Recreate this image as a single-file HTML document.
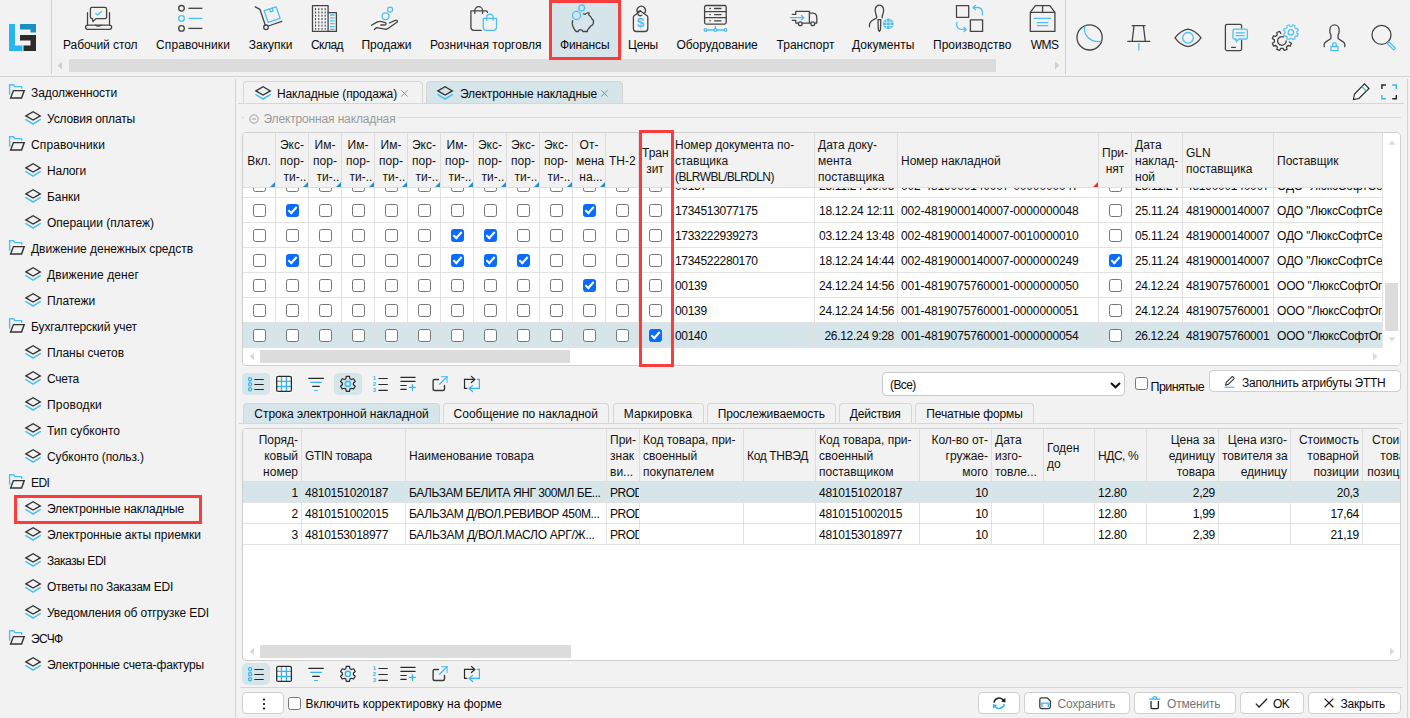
<!DOCTYPE html>
<html lang="ru"><head><meta charset="utf-8"><title>Финансы - Электронные накладные</title>
<style>

*{box-sizing:border-box;margin:0;padding:0}
html,body{width:1410px;height:718px;overflow:hidden;background:#f2f2f2}
body{font-family:"Liberation Sans",sans-serif;font-size:12px;color:#0a0a0a;position:relative}
#app{position:absolute;left:0;top:0;width:1410px;height:718px;overflow:hidden}
.abs{position:absolute}
svg{display:block;overflow:visible}
.t{position:absolute;white-space:nowrap;line-height:14px}
/* nav */
#nav{position:absolute;left:0;top:0;width:1410px;height:77px;background:#f2f2f2}
#nav .hl{position:absolute;left:0;top:76px;width:1410px;height:1px;background:#d2d2d2}
.vsep{position:absolute;width:1px;background:#d0d0d0}
.nv{position:absolute;top:0;height:58px}
.nv .lb{position:absolute;top:38px;left:50%;transform:translateX(-50%);white-space:nowrap;line-height:14px;font-size:12px;color:#141414}
.nv svg{position:absolute;top:4px;left:50%;margin-left:-15px}
.sbtrack{position:absolute;background:#dcdcdc}
/* side */
#side{position:absolute;left:0;top:77px;width:236px;height:641px}
.tr{position:absolute;left:0;height:26px;width:236px}
.tr .lb{position:absolute;top:6px;line-height:14px;white-space:nowrap}
/* main */
.tab{position:absolute;border:1px solid #d6d6d6;border-bottom:none;border-radius:4px 4px 0 0;background:#f2f2f2}
.tab.act{background:#d5e5ea}
.grid{position:absolute;background:#fff;border:1px solid #cfcfcf;border-radius:4px;overflow:hidden}
.hd{position:absolute;background:#f2f2f2;border-right:1px solid #dedede;border-bottom:1px solid #dedede;overflow:hidden}
.hd .hx{position:absolute;left:3px;right:3px;top:calc(50% + 0.5px);transform:translateY(-50%);line-height:17px;font-size:12px;color:#141414}
.cell{position:absolute;border-right:1px solid #e2e2e2;border-bottom:1px solid #e2e2e2;overflow:hidden;white-space:nowrap;line-height:25px;padding:1px 3px 0 3px}
.cb{position:absolute;width:13px;height:13px;border:1px solid #767676;border-radius:2.5px;background:#fff}
.cb.on{background:#0a6cff;border-color:#0a6cff}
.cb.on:after{content:"";position:absolute;left:3.2px;top:0.4px;width:3.4px;height:7px;border:solid #fff;border-width:0 2px 2px 0;transform:rotate(42deg)}
.btn{position:absolute;background:#fff;border:1px solid #cfcfcf;border-radius:4px;height:24px}
.tb{position:absolute;width:28px;height:22px;border-radius:4px}
.tb.on{background:#d5e5ea}
.tb svg{position:absolute;left:4px;top:1px}

</style></head>
<body>
<div id="app">
<div id="nav">
<svg class="abs" style="left:9px;top:24px" width="27" height="27" viewBox="0 0 27 27"><path d="M0 0h6v21.500h7.500v5.500H0z" fill="#29b6f0"/><path d="M11 0h16v8.500h-5.500v-3H11z" fill="#1b8fc4"/><path d="M11 11h16v16H14.500v-5.500H21.500v-5H11z" fill="#2b2b2b"/></svg>
<div class="vsep" style="left:51px;top:0;height:74px"></div>
<div class="vsep" style="left:1065px;top:0;height:74px"></div>
<div class="abs" style="left:549px;top:0;width:72px;height:60px;border:3px solid #f93d3d;background:#d5e5ea"></div>
<div class="t" style="left:63px;top:38px;letter-spacing:-0.069px;">Рабочий стол</div>
<div class="t" style="left:156px;top:38px;letter-spacing:0.118px;">Справочники</div>
<div class="t" style="left:248.75px;top:38px;letter-spacing:-0.002px;">Закупки</div>
<div class="t" style="left:311px;top:38px;letter-spacing:-0.547px;">Склад</div>
<div class="t" style="left:361.5px;top:38px;letter-spacing:-0.018px;">Продажи</div>
<div class="t" style="left:430px;top:38px;letter-spacing:0.010px;">Розничная торговля</div>
<div class="t" style="left:560px;top:38px;letter-spacing:-0.127px;">Финансы</div>
<div class="t" style="left:628px;top:38px;letter-spacing:-0.203px;">Цены</div>
<div class="t" style="left:676.4px;top:38px;letter-spacing:-0.023px;">Оборудование</div>
<div class="t" style="left:776.5px;top:38px;letter-spacing:0.031px;">Транспорт</div>
<div class="t" style="left:852px;top:38px;letter-spacing:0.071px;">Документы</div>
<div class="t" style="left:933px;top:38px;letter-spacing:0.021px;">Производство</div>
<div class="t" style="left:1030.8px;top:38px;letter-spacing:-0.509px;">WMS</div>
<svg class="abs" style="left:0;top:0" width="1410" height="77" viewBox="0 0 1410 77"><g fill="none" stroke="#444" stroke-width="1.3" stroke-linecap="round" stroke-linejoin="round"><rect x="85.6" y="25.2" width="26" height="4.2" rx="2.1"/><path d="M87.5 25V12.6M109.5 25V12.6M95.6 25.3q2.6 1.6 5.6 0"/><path d="M92 7.4h13a1.6 1.6 0 0 1 1.6 1.6v8a1.6 1.6 0 0 1 -1.6 1.6h-9.2l-2.8 3l-.6-3h-.4a1.6 1.6 0 0 1 -1.6-1.6v-8a1.6 1.6 0 0 1 1.6-1.6z"/></g><path fill="none" stroke="#4ec0f0" stroke-width="1.3" stroke-linecap="round" stroke-linejoin="round" stroke-width="1.5" d="M95.8 13.4l1.9 1.6l3.9-3.6"/><circle cx="181.5" cy="8.3" r="2.8" fill="none" stroke="#444" stroke-width="1.3"/><path d="M188.4 8.3H202.4" stroke="#444" stroke-width="1.3" fill="none"/><circle cx="181.5" cy="18.4" r="2.8" fill="none" stroke="#4ec0f0" stroke-width="1.3"/><path d="M188.4 18.4H202.4" stroke="#4ec0f0" stroke-width="1.3" fill="none"/><circle cx="181.5" cy="28.4" r="2.8" fill="none" stroke="#444" stroke-width="1.3"/><path d="M188.4 28.4H202.4" stroke="#444" stroke-width="1.3" fill="none"/><g fill="none" stroke="#444" stroke-width="1.3" stroke-linecap="round" stroke-linejoin="round"><path d="M255.3 6.9l4.6 2.4l5.4 16M268.4 26l13.4-4.6"/><circle cx="266" cy="27.3" r="2.3"/></g><g fill="none" stroke="#4ec0f0" stroke-width="1.3" stroke-linecap="round" stroke-linejoin="round" stroke-width="1.800"><path d="M264.200 10.700l11.900-3.900l4 11.600l-11.900 4z"/><path d="M269.6 8.9l1 3l2.6-.9l-1-3"/></g><g fill="none" stroke="#444" stroke-width="1.3" stroke-linecap="round" stroke-linejoin="round" stroke-linejoin="miter"><rect x="312.5" y="5.6" width="15.6" height="25.8"/><path d="M328.1 12.6h8.3v18.8h-8.3"/></g><path d="M315.6 8.2V29.6M318.8 8.2V29.6M322 8.2V29.6M325.2 8.2V29.6" stroke="#333" stroke-width="1" stroke-dasharray="1.9 1.4" fill="none"/><path d="M330 15H334.6M330 17.9H334.6M330 20.8H334.6M330 23.7H334.6M330 26.6H334.6M330 29.3H334.6" stroke="#4ec0f0" stroke-width="1.3" fill="none"/><circle cx="390.1" cy="9.6" r="2.5" fill="none" stroke="#4ec0f0" stroke-width="1.3" stroke-linecap="round" stroke-linejoin="round" stroke-width="1.5"/><circle cx="385.5" cy="16.3" r="3.4" fill="none" stroke="#4ec0f0" stroke-width="1.3" stroke-linecap="round" stroke-linejoin="round" stroke-width="1.5"/><g fill="none" stroke="#444" stroke-width="1.3" stroke-linecap="round" stroke-linejoin="round"><path d="M371.4 25.3l6-3.4q2-.9 4.400-.2l3.400 1q1.300.600.900 1.500q-.4.800-1.500.800h-3.800"/><path d="M374.400 29.600l2.200-2l8.400 1.600q1.600.300 3-.700l9.300-6.500q.500-.800-.300-1.400q-.700-.600-1.700-.300l-5.900 2.700"/></g><g fill="none" stroke="#444" stroke-width="1.3" stroke-linecap="round" stroke-linejoin="round"><path d="M481.300 30.300h-7.400a3 3 0 0 1 -3-3v-16.500h15q1.600 0 1.600 1.600M474.800 13.400v-2.800a3.900 3.900 0 0 1 7.800 0v2.800"/></g><g fill="none" stroke="#4ec0f0" stroke-width="1.3" stroke-linecap="round" stroke-linejoin="round" stroke-width="1.400"><path d="M483.300 18.300h13.200v9a3 3 0 0 1 -3 3h-7.200a3 3 0 0 1 -3-3zM486.700 20.300v-3a3.200 3.200 0 0 1 6.400 0v3"/></g><circle cx="576.5" cy="15.4" r="4.100" fill="none" stroke="#4ec0f0" stroke-width="1.3" stroke-linecap="round" stroke-linejoin="round"/><circle cx="581.7" cy="7.900" r="2.900" fill="none" stroke="#4ec0f0" stroke-width="1.3" stroke-linecap="round" stroke-linejoin="round"/><path fill="none" stroke="#444" stroke-width="1.3" stroke-linecap="round" stroke-linejoin="round" d="M572.600 20.700q-.900 2.800.500 6.100q1.100 2.600 3 4.700h2.200l.800-1.700h2.600l1.300 1.700h4.300l.500-2.100q1.800-1.500 3-3.500q2.100-.700 2.600-2.600v-3q-.600-.600-1.200-.900q-.600-1.800-1.800-3q-.900-.700-1.700-1.300l.400-2.100q-1.200-.300-2.100 0q-1.100.500-1.800 1.300l-1.700-.500"/><g fill="none" stroke="#444" stroke-width="1.3" stroke-linecap="round" stroke-linejoin="round"><path d="M640.500 11l6.600 4.800q.700.500.700 1.400v11.300a3 3 0 0 1 -3 3h-8.400a3 3 0 0 1 -3-3v-11.300q0-.9.700-1.400z"/><path d="M637.500 12.400a4.200 4.200 0 1 1 6.900 .9M640.500 11a2.400 2.400 0 1 0 1.200 4.200"/></g><text x="640.500" y="27.300" font-family="Liberation Sans,sans-serif" font-size="13" font-weight="bold" fill="#4ec0f0" text-anchor="middle">$</text><g fill="none" stroke="#444" stroke-width="1.3" stroke-linecap="round" stroke-linejoin="round" stroke-width="1.400"><rect x="704.600" y="5.500" width="21.600" height="18.600" rx="1.500"/><path d="M704.600 11.600h21.600M704.600 17.600h21.600M714.500 8.500h6.500M714.500 14.600h6.500M714.500 20.800h6.500M709.800 8.500h.6M709.800 14.600h.6M709.800 20.800h.6"/></g><g fill="none" stroke="#4ec0f0" stroke-width="1.3" stroke-linecap="round" stroke-linejoin="round"><path d="M706.800 30h7.300M716.800 30h7.300M715.400 26.500v2"/><circle cx="705.500" cy="30" r="1.300"/><circle cx="715.400" cy="30" r="1.300"/><circle cx="725.500" cy="30" r="1.300"/></g><g fill="none" stroke="#444" stroke-width="1.3" stroke-linecap="round" stroke-linejoin="round"><path d="M792.300 14.300h3.500v-3h13.600v11.800M792.300 20.400h3.500v2.700h2.400M802.400 23.100h8.400M809.400 13.200h3.600q3.800.4 3.800 4.600v5.300h-1.900"/><circle cx="800.300" cy="23.800" r="1.900"/><circle cx="812.800" cy="23.800" r="1.900"/></g><path fill="none" stroke="#4ec0f0" stroke-width="1.3" stroke-linecap="round" stroke-linejoin="round" stroke-width="1.500" d="M790.300 17.700h13.200M801.400 15.500l2.400 2.200l-2.400 2.200"/><g fill="none" stroke="#444" stroke-width="1.3" stroke-linecap="round" stroke-linejoin="round"><path d="M876.600 17.900q.300-1.700-.600-3.300q-1.300-3.600-.600-6.200q1-3.300 4-3.300t4 3.300q.700 2.600-.600 6.200q-.900 1.600-.600 3.300M876 18.300q-6 2.600-6.500 5.900v2.600M878 19.600h2.800l-.3 10l-1.100 1.800l-1.100-1.800z"/></g><circle cx="888.300" cy="23.800" r="5.300" fill="#4ec0f0"/><path d="M883.500 22.200h9.600M883.500 25.500h9.600M886.500 19v9.600M890.100 19v9.600" stroke="#d8f0fa" stroke-width=".8" fill="none"/><g fill="none" stroke="#444" stroke-width="1.3" stroke-linecap="round" stroke-linejoin="round" stroke-width="1.500" stroke-linejoin="miter"><rect x="956.500" y="5.700" width="12.200" height="11.600"/><rect x="970.400" y="19.800" width="12.200" height="11.600"/></g><g fill="none" stroke="#4ec0f0" stroke-width="1.3" stroke-linecap="round" stroke-linejoin="round" stroke-width="1.500"><path d="M982.400 14.700v-2.400q-.2-4.600-4.800-4.800h-4.400M975.300 5.500l-2.300 2l2.300 2"/><path d="M956.700 22.400v2.400q.2 4.400 4.800 4.600h4.400M964 27.300l2.300 2.100l-2.300 2.100"/></g><g fill="none" stroke="#444" stroke-width="1.3" stroke-linecap="round" stroke-linejoin="round" stroke-width="1.500" stroke-linejoin="miter"><path d="M1030.300 12.400h24.600v19h-24.600zM1030.300 12.400l5-6.800h14.500l5.100 6.800M1042.600 5.600v6.800"/></g><path fill="none" stroke="#4ec0f0" stroke-width="1.3" stroke-linecap="round" stroke-linejoin="round" stroke-width="1.500" d="M1034.200 18.300h16.400M1037.200 22.600h10.600M1037.200 25.600h10.600"/><circle cx="1089.600" cy="37.400" r="12.600" fill="none" stroke="#444" stroke-width="1.3" stroke-linecap="round" stroke-linejoin="round" stroke-width="1.500"/><path fill="none" stroke="#4ec0f0" stroke-width="1.3" stroke-linecap="round" stroke-linejoin="round" d="M1085 26q-2 6 2.800 11.200q5.200 5.200 13.200 4.200"/><path fill="none" stroke="#444" stroke-width="1.3" stroke-linecap="round" stroke-linejoin="round" stroke-width="1.400" d="M1132.200 25.700h12.800M1134 25.700l-1.800 15.600M1143.400 25.700l1.900 15.600M1127.800 41.400h22"/><path fill="none" stroke="#4ec0f0" stroke-width="1.3" stroke-linecap="round" stroke-linejoin="round" stroke-width="1.600" d="M1138.900 43.600v6.400"/><path fill="none" stroke="#444" stroke-width="1.3" stroke-linecap="round" stroke-linejoin="round" stroke-width="1.500" d="M1175 37.800q5.400-7.200 13-8.600q7.600 1.400 13 8.600q-5.400 7.400-13 8.900q-7.600-1.500-13-8.900z"/><circle cx="1188" cy="37.800" r="5.300" fill="none" stroke="#4ec0f0" stroke-width="1.3" stroke-linecap="round" stroke-linejoin="round" stroke-width="1.600"/><path fill="none" stroke="#444" stroke-width="1.3" stroke-linecap="round" stroke-linejoin="round" stroke-width="1.400" d="M1241.600 28v-2a1.600 1.600 0 0 0 -1.600-1.600h-13a1.600 1.600 0 0 0 -1.600 1.600v23a1.600 1.600 0 0 0 1.600 1.600h13a1.600 1.600 0 0 0 1.600-1.600v-8.500M1231.600 47.300h3.800"/><path fill="none" stroke="#4ec0f0" stroke-width="1.3" stroke-linecap="round" stroke-linejoin="round" d="M1234.600 29.200h11.200a1.600 1.600 0 0 1 1.600 1.600v6.600a1.600 1.600 0 0 1 -1.600 1.600h-6.800l-2.800 2.700v-2.700h-1.600a1.600 1.600 0 0 1 -1.600-1.600v-6.600a1.600 1.600 0 0 1 1.600-1.600zM1236.200 32.900h8M1236.200 35.700h8"/><path fill="none" stroke="#444" stroke-width="1.3" stroke-linecap="round" stroke-linejoin="round" stroke-width="1.400" d="M1289.4 42.0 L1291.4 43.2 L1290.3 46.0 L1288.0 45.5 L1286.5 47.0 L1287.0 49.3 L1284.2 50.4 L1283.0 48.4 L1280.8 48.4 L1279.6 50.4 L1276.8 49.3 L1277.3 47.0 L1275.8 45.5 L1273.5 46.0 L1272.4 43.2 L1274.4 42.0 L1274.4 39.8 L1272.4 38.6 L1273.5 35.8 L1275.8 36.3 L1277.3 34.8 L1276.8 32.5 L1279.6 31.4 L1280.8 33.4"/><path fill="none" stroke="#444" stroke-width="1.3" stroke-linecap="round" stroke-linejoin="round" stroke-width="1.400" d="M1283.400 36.900A4.300 4.300 0 1 0 1286.200 40.900"/><path fill="none" stroke="#4ec0f0" stroke-width="1.3" stroke-linecap="round" stroke-linejoin="round" stroke-width="1" stroke-opacity=".85" d="M1296.9 33.2 L1298.3 34.1 L1297.4 36.3 L1295.8 36.0 L1294.6 37.2 L1294.9 38.8 L1292.7 39.7 L1291.8 38.3 L1290.0 38.3 L1289.1 39.7 L1286.9 38.8 L1287.2 37.2 L1286.0 36.0 L1284.4 36.3 L1283.5 34.1 L1284.9 33.2 L1284.9 31.4 L1283.5 30.5 L1284.4 28.3 L1286.0 28.6 L1287.2 27.4 L1286.9 25.8 L1289.1 24.9 L1290.0 26.3 L1291.8 26.3 L1292.7 24.9 L1294.9 25.8 L1294.6 27.4 L1295.8 28.6 L1297.4 28.3 L1298.3 30.5 L1296.9 31.4z"/><circle cx="1290.900" cy="32.300" r="2.700" fill="none" stroke="#4ec0f0" stroke-width="1.3" stroke-linecap="round" stroke-linejoin="round" stroke-width="1.300"/><path fill="none" stroke="#444" stroke-width="1.3" stroke-linecap="round" stroke-linejoin="round" stroke-width="1.400" d="M1324.200 46.700V44.500q0-1.600 1.400-2.400l5.300-3.600v-3.900q-1-.900-1-2.300v-2.800a4.600 4.600 0 0 1 9.200 0v2.800q0 1.400-1 2.300v3.900l5.300 3.600q1.400.800 1.400 2.400V46.700"/><path fill="none" stroke="#4ec0f0" stroke-width="1.3" stroke-linecap="round" stroke-linejoin="round" stroke-width="1.300" d="M1331 46.500h7v4.100h-7zM1332.700 46.400v-1.900a1.800 1.800 0 0 1 3.600 0v1.900"/><circle cx="1381.500" cy="34.900" r="9.500" fill="none" stroke="#444" stroke-width="1.3" stroke-linecap="round" stroke-linejoin="round" stroke-width="1.600"/><path fill="none" stroke="#4ec0f0" stroke-width="1.3" stroke-linecap="round" stroke-linejoin="round" stroke-width="1.500" stroke-linejoin="miter" d="M1387.200 43.500l1.700-1.700l6.500 6.400l-1.700 1.700z"/></svg>
<div class="sbtrack" style="left:69px;top:59px;width:927px;height:13px"></div>
<svg class="abs" style="left:57px;top:61px" width="6" height="9" viewBox="0 0 6 9"><path d="M5 0.500v8L0.500 4.500z" fill="#d0d0d0"/></svg>
<svg class="abs" style="left:1054px;top:61px" width="6" height="9" viewBox="0 0 6 9"><path d="M1 0.500v8L5.500 4.500z" fill="#d0d0d0"/></svg>
<div class="abs" style="left:549px;top:0;width:72px;height:60px;border:3px solid #f93d3d"></div>
<div class="hl"></div>
</div>
<div id="side">
<div class="vsep" style="left:235px;top:2px;height:640px;background:#d4d4d4"></div>
<div class="tr" style="top:3px"><div class="abs" style="left:9px;top:4px"><svg width="16" height="15" viewBox="9 84 16 15"><path d="M9.600 94.800V84.800h4.200l1 1.800h6.900v2.200" fill="none" stroke="#4ec0f0" stroke-width="1.400" stroke-linejoin="round"/><path d="M10.600 98h11l2.600-7.400h-10.800z" fill="none" stroke="#333" stroke-width="1.400" stroke-linejoin="miter"/></svg></div><div class="lb" style="left:31px;letter-spacing:-0.090px;">Задолженности</div></div>
<div class="tr" style="top:29px"><div class="abs" style="left:25px;top:5px"><svg width="16" height="14" viewBox="25 111 16 14"><path d="M25.900 119.600l7.200 4.400l7.200-4.400" fill="none" stroke="#4ec0f0" stroke-width="1.500" stroke-linecap="round" stroke-linejoin="miter"/><path d="M25.900 115.900l7.200-4.200l7.200 4.200l-7.200 4.200z" fill="none" stroke="#333" stroke-width="1.300" stroke-linejoin="miter"/></svg></div><div class="lb" style="left:47px;letter-spacing:-0.161px;">Условия оплаты</div></div>
<div class="tr" style="top:55px"><div class="abs" style="left:9px;top:4px"><svg width="16" height="15" viewBox="9 84 16 15"><path d="M9.600 94.800V84.800h4.200l1 1.800h6.900v2.200" fill="none" stroke="#4ec0f0" stroke-width="1.400" stroke-linejoin="round"/><path d="M10.600 98h11l2.600-7.400h-10.800z" fill="none" stroke="#333" stroke-width="1.400" stroke-linejoin="miter"/></svg></div><div class="lb" style="left:31px;letter-spacing:0.118px;">Справочники</div></div>
<div class="tr" style="top:81px"><div class="abs" style="left:25px;top:5px"><svg width="16" height="14" viewBox="25 111 16 14"><path d="M25.900 119.600l7.200 4.400l7.200-4.400" fill="none" stroke="#4ec0f0" stroke-width="1.500" stroke-linecap="round" stroke-linejoin="miter"/><path d="M25.900 115.900l7.200-4.200l7.200 4.200l-7.200 4.200z" fill="none" stroke="#333" stroke-width="1.300" stroke-linejoin="miter"/></svg></div><div class="lb" style="left:47px;letter-spacing:-0.206px;">Налоги</div></div>
<div class="tr" style="top:107px"><div class="abs" style="left:25px;top:5px"><svg width="16" height="14" viewBox="25 111 16 14"><path d="M25.900 119.600l7.200 4.400l7.200-4.400" fill="none" stroke="#4ec0f0" stroke-width="1.500" stroke-linecap="round" stroke-linejoin="miter"/><path d="M25.900 115.900l7.200-4.200l7.200 4.200l-7.200 4.200z" fill="none" stroke="#333" stroke-width="1.300" stroke-linejoin="miter"/></svg></div><div class="lb" style="left:47px;letter-spacing:-0.028px;">Банки</div></div>
<div class="tr" style="top:133px"><div class="abs" style="left:25px;top:5px"><svg width="16" height="14" viewBox="25 111 16 14"><path d="M25.900 119.600l7.200 4.400l7.200-4.400" fill="none" stroke="#4ec0f0" stroke-width="1.500" stroke-linecap="round" stroke-linejoin="miter"/><path d="M25.900 115.900l7.200-4.200l7.200 4.200l-7.200 4.200z" fill="none" stroke="#333" stroke-width="1.300" stroke-linejoin="miter"/></svg></div><div class="lb" style="left:47px;letter-spacing:-0.017px;">Операции (платеж)</div></div>
<div class="tr" style="top:159px"><div class="abs" style="left:9px;top:4px"><svg width="16" height="15" viewBox="9 84 16 15"><path d="M9.600 94.800V84.800h4.200l1 1.800h6.900v2.200" fill="none" stroke="#4ec0f0" stroke-width="1.400" stroke-linejoin="round"/><path d="M10.600 98h11l2.600-7.400h-10.800z" fill="none" stroke="#333" stroke-width="1.400" stroke-linejoin="miter"/></svg></div><div class="lb" style="left:31px;letter-spacing:-0.026px;">Движение денежных средств</div></div>
<div class="tr" style="top:185px"><div class="abs" style="left:25px;top:5px"><svg width="16" height="14" viewBox="25 111 16 14"><path d="M25.900 119.600l7.200 4.400l7.200-4.400" fill="none" stroke="#4ec0f0" stroke-width="1.500" stroke-linecap="round" stroke-linejoin="miter"/><path d="M25.900 115.900l7.200-4.200l7.200 4.200l-7.200 4.200z" fill="none" stroke="#333" stroke-width="1.300" stroke-linejoin="miter"/></svg></div><div class="lb" style="left:47px;letter-spacing:0.099px;">Движение денег</div></div>
<div class="tr" style="top:211px"><div class="abs" style="left:25px;top:5px"><svg width="16" height="14" viewBox="25 111 16 14"><path d="M25.900 119.600l7.200 4.400l7.200-4.400" fill="none" stroke="#4ec0f0" stroke-width="1.500" stroke-linecap="round" stroke-linejoin="miter"/><path d="M25.900 115.900l7.200-4.200l7.200 4.200l-7.200 4.200z" fill="none" stroke="#333" stroke-width="1.300" stroke-linejoin="miter"/></svg></div><div class="lb" style="left:47px;letter-spacing:-0.096px;">Платежи</div></div>
<div class="tr" style="top:237px"><div class="abs" style="left:9px;top:4px"><svg width="16" height="15" viewBox="9 84 16 15"><path d="M9.600 94.800V84.800h4.200l1 1.800h6.900v2.200" fill="none" stroke="#4ec0f0" stroke-width="1.400" stroke-linejoin="round"/><path d="M10.600 98h11l2.600-7.400h-10.800z" fill="none" stroke="#333" stroke-width="1.400" stroke-linejoin="miter"/></svg></div><div class="lb" style="left:31px;letter-spacing:-0.118px;">Бухгалтерский учет</div></div>
<div class="tr" style="top:263px"><div class="abs" style="left:25px;top:5px"><svg width="16" height="14" viewBox="25 111 16 14"><path d="M25.900 119.600l7.200 4.400l7.200-4.400" fill="none" stroke="#4ec0f0" stroke-width="1.500" stroke-linecap="round" stroke-linejoin="miter"/><path d="M25.900 115.900l7.200-4.200l7.200 4.200l-7.200 4.200z" fill="none" stroke="#333" stroke-width="1.300" stroke-linejoin="miter"/></svg></div><div class="lb" style="left:47px;letter-spacing:-0.059px;">Планы счетов</div></div>
<div class="tr" style="top:289px"><div class="abs" style="left:25px;top:5px"><svg width="16" height="14" viewBox="25 111 16 14"><path d="M25.900 119.600l7.200 4.400l7.200-4.400" fill="none" stroke="#4ec0f0" stroke-width="1.500" stroke-linecap="round" stroke-linejoin="miter"/><path d="M25.900 115.900l7.200-4.200l7.200 4.200l-7.200 4.200z" fill="none" stroke="#333" stroke-width="1.300" stroke-linejoin="miter"/></svg></div><div class="lb" style="left:47px;letter-spacing:-0.219px;">Счета</div></div>
<div class="tr" style="top:315px"><div class="abs" style="left:25px;top:5px"><svg width="16" height="14" viewBox="25 111 16 14"><path d="M25.900 119.600l7.200 4.400l7.200-4.400" fill="none" stroke="#4ec0f0" stroke-width="1.500" stroke-linecap="round" stroke-linejoin="miter"/><path d="M25.900 115.900l7.200-4.200l7.200 4.200l-7.200 4.200z" fill="none" stroke="#333" stroke-width="1.300" stroke-linejoin="miter"/></svg></div><div class="lb" style="left:47px;letter-spacing:0.178px;">Проводки</div></div>
<div class="tr" style="top:341px"><div class="abs" style="left:25px;top:5px"><svg width="16" height="14" viewBox="25 111 16 14"><path d="M25.900 119.600l7.200 4.400l7.200-4.400" fill="none" stroke="#4ec0f0" stroke-width="1.500" stroke-linecap="round" stroke-linejoin="miter"/><path d="M25.900 115.900l7.200-4.200l7.200 4.200l-7.200 4.200z" fill="none" stroke="#333" stroke-width="1.300" stroke-linejoin="miter"/></svg></div><div class="lb" style="left:47px;letter-spacing:-0.007px;">Тип субконто</div></div>
<div class="tr" style="top:367px"><div class="abs" style="left:25px;top:5px"><svg width="16" height="14" viewBox="25 111 16 14"><path d="M25.900 119.600l7.200 4.400l7.200-4.400" fill="none" stroke="#4ec0f0" stroke-width="1.500" stroke-linecap="round" stroke-linejoin="miter"/><path d="M25.900 115.900l7.200-4.200l7.200 4.200l-7.200 4.200z" fill="none" stroke="#333" stroke-width="1.300" stroke-linejoin="miter"/></svg></div><div class="lb" style="left:47px;letter-spacing:-0.101px;">Субконто (польз.)</div></div>
<div class="tr" style="top:393px"><div class="abs" style="left:9px;top:4px"><svg width="16" height="15" viewBox="9 84 16 15"><path d="M9.600 94.800V84.800h4.200l1 1.800h6.900v2.200" fill="none" stroke="#4ec0f0" stroke-width="1.400" stroke-linejoin="round"/><path d="M10.600 98h11l2.600-7.400h-10.800z" fill="none" stroke="#333" stroke-width="1.400" stroke-linejoin="miter"/></svg></div><div class="lb" style="left:31px;letter-spacing:-0.600px;">EDI</div></div>
<div class="tr" style="top:419px"><div class="abs" style="left:25px;top:5px"><svg width="16" height="14" viewBox="25 111 16 14"><path d="M25.900 119.600l7.200 4.400l7.200-4.400" fill="none" stroke="#4ec0f0" stroke-width="1.500" stroke-linecap="round" stroke-linejoin="miter"/><path d="M25.900 115.900l7.200-4.200l7.200 4.200l-7.200 4.200z" fill="none" stroke="#333" stroke-width="1.300" stroke-linejoin="miter"/></svg></div><div class="lb" style="left:47px;letter-spacing:-0.110px;">Электронные накладные</div></div>
<div class="tr" style="top:445px"><div class="abs" style="left:25px;top:5px"><svg width="16" height="14" viewBox="25 111 16 14"><path d="M25.900 119.600l7.200 4.400l7.200-4.400" fill="none" stroke="#4ec0f0" stroke-width="1.500" stroke-linecap="round" stroke-linejoin="miter"/><path d="M25.900 115.900l7.200-4.200l7.200 4.200l-7.200 4.200z" fill="none" stroke="#333" stroke-width="1.300" stroke-linejoin="miter"/></svg></div><div class="lb" style="left:47px;letter-spacing:-0.012px;">Электронные акты приемки</div></div>
<div class="tr" style="top:471px"><div class="abs" style="left:25px;top:5px"><svg width="16" height="14" viewBox="25 111 16 14"><path d="M25.900 119.600l7.200 4.400l7.200-4.400" fill="none" stroke="#4ec0f0" stroke-width="1.500" stroke-linecap="round" stroke-linejoin="miter"/><path d="M25.900 115.900l7.200-4.200l7.200 4.200l-7.200 4.200z" fill="none" stroke="#333" stroke-width="1.300" stroke-linejoin="miter"/></svg></div><div class="lb" style="left:47px;letter-spacing:-0.445px;">Заказы EDI</div></div>
<div class="tr" style="top:497px"><div class="abs" style="left:25px;top:5px"><svg width="16" height="14" viewBox="25 111 16 14"><path d="M25.900 119.600l7.200 4.400l7.200-4.400" fill="none" stroke="#4ec0f0" stroke-width="1.500" stroke-linecap="round" stroke-linejoin="miter"/><path d="M25.900 115.900l7.200-4.200l7.200 4.200l-7.200 4.200z" fill="none" stroke="#333" stroke-width="1.300" stroke-linejoin="miter"/></svg></div><div class="lb" style="left:47px;letter-spacing:-0.240px;">Ответы по Заказам EDI</div></div>
<div class="tr" style="top:523px"><div class="abs" style="left:25px;top:5px"><svg width="16" height="14" viewBox="25 111 16 14"><path d="M25.900 119.600l7.200 4.400l7.200-4.400" fill="none" stroke="#4ec0f0" stroke-width="1.500" stroke-linecap="round" stroke-linejoin="miter"/><path d="M25.900 115.900l7.200-4.200l7.200 4.200l-7.200 4.200z" fill="none" stroke="#333" stroke-width="1.300" stroke-linejoin="miter"/></svg></div><div class="lb" style="left:47px;letter-spacing:-0.110px;">Уведомления об отгрузке EDI</div></div>
<div class="tr" style="top:549px"><div class="abs" style="left:9px;top:4px"><svg width="16" height="15" viewBox="9 84 16 15"><path d="M9.600 94.800V84.800h4.200l1 1.800h6.900v2.200" fill="none" stroke="#4ec0f0" stroke-width="1.400" stroke-linejoin="round"/><path d="M10.600 98h11l2.600-7.400h-10.800z" fill="none" stroke="#333" stroke-width="1.400" stroke-linejoin="miter"/></svg></div><div class="lb" style="left:31px;letter-spacing:-0.600px;">ЭСЧФ</div></div>
<div class="tr" style="top:575px"><div class="abs" style="left:25px;top:5px"><svg width="16" height="14" viewBox="25 111 16 14"><path d="M25.900 119.600l7.200 4.400l7.200-4.400" fill="none" stroke="#4ec0f0" stroke-width="1.500" stroke-linecap="round" stroke-linejoin="miter"/><path d="M25.900 115.900l7.200-4.200l7.200 4.200l-7.200 4.200z" fill="none" stroke="#333" stroke-width="1.300" stroke-linejoin="miter"/></svg></div><div class="lb" style="left:47px;letter-spacing:-0.167px;">Электронные счета-фактуры</div></div>
<div class="abs" style="left:14px;top:418px;width:188px;height:29px;border:3px solid #f93d3d"></div>
</div>
<div id="main">
<div class="vsep" style="left:1407px;top:79px;height:639px;background:#d4d4d4"></div>
<div class="abs" style="left:238px;top:103px;width:1166px;height:1px;background:#d6d6d6"></div>
<div class="tab" style="left:243px;top:81px;width:180px;height:22px"><div class="abs" style="left:10.500px;top:4px"><svg width="16" height="14" viewBox="25 111 16 14"><path d="M25.900 119.600l7.200 4.400l7.200-4.400" fill="none" stroke="#4ec0f0" stroke-width="1.500" stroke-linecap="round"/><path d="M25.900 115.900l7.200-4.200l7.200 4.200l-7.200 4.200z" fill="none" stroke="#333" stroke-width="1.300"/></svg></div><div class="t" style="left:33px;top:5px;letter-spacing:-0.138px;">Накладные (продажа)</div><svg class="abs" style="left:156.600px;top:7.800px" width="7" height="7" viewBox="0 0 7 7"><path d="M0.300 0.300l6.200 6.200M6.500 0.300l-6.200 6.200" stroke="#8c8c8c" stroke-width="1" fill="none"/></svg></div>
<div class="tab act" style="left:426px;top:81px;width:197px;height:22px"><div class="abs" style="left:10px;top:4px"><svg width="16" height="14" viewBox="25 111 16 14"><path d="M25.900 119.600l7.200 4.400l7.200-4.400" fill="none" stroke="#4ec0f0" stroke-width="1.500" stroke-linecap="round"/><path d="M25.900 115.900l7.200-4.200l7.200 4.200l-7.200 4.200z" fill="none" stroke="#333" stroke-width="1.300"/></svg></div><div class="t" style="left:33px;top:5px;letter-spacing:-0.110px;">Электронные накладные</div><svg class="abs" style="left:173.700px;top:7.800px" width="7" height="7" viewBox="0 0 7 7"><path d="M0.300 0.300l6.200 6.200M6.500 0.300l-6.200 6.200" stroke="#8c8c8c" stroke-width="1" fill="none"/></svg></div>
<svg class="abs" style="left:1352px;top:83px" width="18" height="18" viewBox="1352 83 18 18"><path d="M1353.400 99.500L1354.500 94L1364.500 83.900L1369 88.500L1358.900 98.500z" fill="#f8f8f8" stroke="#222" stroke-width="1.100" stroke-linejoin="miter"/><path d="M1361.900 86.700L1366.300 91.100" stroke="#35b5ee" stroke-width="1.200"/></svg>
<svg class="abs" style="left:1380px;top:83px" width="18" height="18" viewBox="1380 83 18 18"><path d="M1381.900 88.900v-3.900h4M1396.300 94.900v3.900h-4" fill="none" stroke="#222" stroke-width="1.400"/><path d="M1392.300 85h4v3.900M1385.900 98.800h-4v-3.900" fill="none" stroke="#35b5ee" stroke-width="1.400"/></svg>
<div class="abs" style="left:242px;top:117px;width:1159px;height:1px;background:#dadada"></div>
<div class="abs" style="left:244px;top:110px;width:153px;height:16px;background:#f2f2f2"></div>
<svg class="abs" style="left:249px;top:113.500px" width="10" height="10" viewBox="0 0 10 10"><circle cx="5" cy="5" r="4.200" fill="none" stroke="#a0a0a0" stroke-width="1"/><path d="M2.800 5h4.400" stroke="#a0a0a0" stroke-width="1"/></svg>
<div class="t" style="left:263.500px;top:112px;color:#9a9a9a;letter-spacing:-0.146px;">Электронная накладная</div>
<div class="grid" style="left:242px;top:132px;width:1159px;height:234px"><div class="cell" style="left:0px;top:40px;width:33px;height:25px;"><div class="cb" style="left:10px;top:6px"></div></div><div class="cell" style="left:33px;top:40px;width:33px;height:25px;"><div class="cb" style="left:10px;top:6px"></div></div><div class="cell" style="left:66px;top:40px;width:33px;height:25px;"><div class="cb" style="left:10px;top:6px"></div></div><div class="cell" style="left:99px;top:40px;width:33px;height:25px;"><div class="cb" style="left:10px;top:6px"></div></div><div class="cell" style="left:132px;top:40px;width:33px;height:25px;"><div class="cb" style="left:10px;top:6px"></div></div><div class="cell" style="left:165px;top:40px;width:33px;height:25px;"><div class="cb" style="left:10px;top:6px"></div></div><div class="cell" style="left:198px;top:40px;width:33px;height:25px;"><div class="cb" style="left:10px;top:6px"></div></div><div class="cell" style="left:231px;top:40px;width:33px;height:25px;"><div class="cb" style="left:10px;top:6px"></div></div><div class="cell" style="left:264px;top:40px;width:33px;height:25px;"><div class="cb" style="left:10px;top:6px"></div></div><div class="cell" style="left:297px;top:40px;width:33px;height:25px;"><div class="cb" style="left:10px;top:6px"></div></div><div class="cell" style="left:330px;top:40px;width:33px;height:25px;"><div class="cb" style="left:10px;top:6px"></div></div><div class="cell" style="left:363px;top:40px;width:33px;height:25px;"><div class="cb" style="left:10px;top:6px"></div></div><div class="cell" style="left:396px;top:40px;width:33px;height:25px;"><div class="cb" style="left:10px;top:6px"></div></div><div class="cell" style="left:429px;top:40px;width:143px;height:25px;"><span style="letter-spacing:-0.315px;">00137</span></div><div class="cell" style="left:572px;top:40px;width:83px;height:25px;text-align:right;"><span style="letter-spacing:-0.306px;">23.11.24 16:05</span></div><div class="cell" style="left:655px;top:40px;width:201px;height:25px;"><span style="letter-spacing:-0.140px;">002-4819000140007-0000000047</span></div><div class="cell" style="left:856px;top:40px;width:33px;height:25px;"><div class="cb" style="left:10px;top:6px"></div></div><div class="cell" style="left:889px;top:40px;width:51px;height:25px;"><span style="letter-spacing:-0.254px;">25.11.24</span></div><div class="cell" style="left:940px;top:40px;width:91px;height:25px;"><span style="letter-spacing:-0.267px;">4819000140007</span></div><div class="cell" style="left:1031px;top:40px;width:109px;height:25px;"><span style="letter-spacing:-0.178px;">ОДО "ЛюксСофтСе</span></div><div class="cell" style="left:0px;top:65px;width:33px;height:25px;"><div class="cb" style="left:10px;top:6px"></div></div><div class="cell" style="left:33px;top:65px;width:33px;height:25px;"><div class="cb on" style="left:10px;top:6px"></div></div><div class="cell" style="left:66px;top:65px;width:33px;height:25px;"><div class="cb" style="left:10px;top:6px"></div></div><div class="cell" style="left:99px;top:65px;width:33px;height:25px;"><div class="cb" style="left:10px;top:6px"></div></div><div class="cell" style="left:132px;top:65px;width:33px;height:25px;"><div class="cb" style="left:10px;top:6px"></div></div><div class="cell" style="left:165px;top:65px;width:33px;height:25px;"><div class="cb" style="left:10px;top:6px"></div></div><div class="cell" style="left:198px;top:65px;width:33px;height:25px;"><div class="cb" style="left:10px;top:6px"></div></div><div class="cell" style="left:231px;top:65px;width:33px;height:25px;"><div class="cb" style="left:10px;top:6px"></div></div><div class="cell" style="left:264px;top:65px;width:33px;height:25px;"><div class="cb" style="left:10px;top:6px"></div></div><div class="cell" style="left:297px;top:65px;width:33px;height:25px;"><div class="cb" style="left:10px;top:6px"></div></div><div class="cell" style="left:330px;top:65px;width:33px;height:25px;"><div class="cb on" style="left:10px;top:6px"></div></div><div class="cell" style="left:363px;top:65px;width:33px;height:25px;"><div class="cb" style="left:10px;top:6px"></div></div><div class="cell" style="left:396px;top:65px;width:33px;height:25px;"><div class="cb" style="left:10px;top:6px"></div></div><div class="cell" style="left:429px;top:65px;width:143px;height:25px;"><span style="letter-spacing:-0.314px;">1734513077175</span></div><div class="cell" style="left:572px;top:65px;width:83px;height:25px;text-align:right;"><span style="letter-spacing:-0.306px;">18.12.24 12:11</span></div><div class="cell" style="left:655px;top:65px;width:201px;height:25px;"><span style="letter-spacing:-0.140px;">002-4819000140007-0000000048</span></div><div class="cell" style="left:856px;top:65px;width:33px;height:25px;"><div class="cb" style="left:10px;top:6px"></div></div><div class="cell" style="left:889px;top:65px;width:51px;height:25px;"><span style="letter-spacing:-0.254px;">25.11.24</span></div><div class="cell" style="left:940px;top:65px;width:91px;height:25px;"><span style="letter-spacing:-0.267px;">4819000140007</span></div><div class="cell" style="left:1031px;top:65px;width:109px;height:25px;"><span style="letter-spacing:-0.178px;">ОДО "ЛюксСофтСе</span></div><div class="cell" style="left:0px;top:90px;width:33px;height:25px;"><div class="cb" style="left:10px;top:6px"></div></div><div class="cell" style="left:33px;top:90px;width:33px;height:25px;"><div class="cb" style="left:10px;top:6px"></div></div><div class="cell" style="left:66px;top:90px;width:33px;height:25px;"><div class="cb" style="left:10px;top:6px"></div></div><div class="cell" style="left:99px;top:90px;width:33px;height:25px;"><div class="cb" style="left:10px;top:6px"></div></div><div class="cell" style="left:132px;top:90px;width:33px;height:25px;"><div class="cb" style="left:10px;top:6px"></div></div><div class="cell" style="left:165px;top:90px;width:33px;height:25px;"><div class="cb" style="left:10px;top:6px"></div></div><div class="cell" style="left:198px;top:90px;width:33px;height:25px;"><div class="cb on" style="left:10px;top:6px"></div></div><div class="cell" style="left:231px;top:90px;width:33px;height:25px;"><div class="cb on" style="left:10px;top:6px"></div></div><div class="cell" style="left:264px;top:90px;width:33px;height:25px;"><div class="cb" style="left:10px;top:6px"></div></div><div class="cell" style="left:297px;top:90px;width:33px;height:25px;"><div class="cb" style="left:10px;top:6px"></div></div><div class="cell" style="left:330px;top:90px;width:33px;height:25px;"><div class="cb" style="left:10px;top:6px"></div></div><div class="cell" style="left:363px;top:90px;width:33px;height:25px;"><div class="cb" style="left:10px;top:6px"></div></div><div class="cell" style="left:396px;top:90px;width:33px;height:25px;"><div class="cb" style="left:10px;top:6px"></div></div><div class="cell" style="left:429px;top:90px;width:143px;height:25px;"><span style="letter-spacing:-0.314px;">1733222939273</span></div><div class="cell" style="left:572px;top:90px;width:83px;height:25px;text-align:right;"><span style="letter-spacing:-0.370px;">03.12.24 13:48</span></div><div class="cell" style="left:655px;top:90px;width:201px;height:25px;"><span style="letter-spacing:-0.140px;">002-4819000140007-0010000010</span></div><div class="cell" style="left:856px;top:90px;width:33px;height:25px;"><div class="cb" style="left:10px;top:6px"></div></div><div class="cell" style="left:889px;top:90px;width:51px;height:25px;"><span style="letter-spacing:-0.254px;">05.11.24</span></div><div class="cell" style="left:940px;top:90px;width:91px;height:25px;"><span style="letter-spacing:-0.267px;">4819000140007</span></div><div class="cell" style="left:1031px;top:90px;width:109px;height:25px;"><span style="letter-spacing:-0.178px;">ОДО "ЛюксСофтСе</span></div><div class="cell" style="left:0px;top:115px;width:33px;height:25px;"><div class="cb" style="left:10px;top:6px"></div></div><div class="cell" style="left:33px;top:115px;width:33px;height:25px;"><div class="cb on" style="left:10px;top:6px"></div></div><div class="cell" style="left:66px;top:115px;width:33px;height:25px;"><div class="cb" style="left:10px;top:6px"></div></div><div class="cell" style="left:99px;top:115px;width:33px;height:25px;"><div class="cb" style="left:10px;top:6px"></div></div><div class="cell" style="left:132px;top:115px;width:33px;height:25px;"><div class="cb" style="left:10px;top:6px"></div></div><div class="cell" style="left:165px;top:115px;width:33px;height:25px;"><div class="cb" style="left:10px;top:6px"></div></div><div class="cell" style="left:198px;top:115px;width:33px;height:25px;"><div class="cb on" style="left:10px;top:6px"></div></div><div class="cell" style="left:231px;top:115px;width:33px;height:25px;"><div class="cb on" style="left:10px;top:6px"></div></div><div class="cell" style="left:264px;top:115px;width:33px;height:25px;"><div class="cb on" style="left:10px;top:6px"></div></div><div class="cell" style="left:297px;top:115px;width:33px;height:25px;"><div class="cb" style="left:10px;top:6px"></div></div><div class="cell" style="left:330px;top:115px;width:33px;height:25px;"><div class="cb" style="left:10px;top:6px"></div></div><div class="cell" style="left:363px;top:115px;width:33px;height:25px;"><div class="cb" style="left:10px;top:6px"></div></div><div class="cell" style="left:396px;top:115px;width:33px;height:25px;"><div class="cb" style="left:10px;top:6px"></div></div><div class="cell" style="left:429px;top:115px;width:143px;height:25px;"><span style="letter-spacing:-0.314px;">1734522280170</span></div><div class="cell" style="left:572px;top:115px;width:83px;height:25px;text-align:right;"><span style="letter-spacing:-0.370px;">18.12.24 14:44</span></div><div class="cell" style="left:655px;top:115px;width:201px;height:25px;"><span style="letter-spacing:-0.140px;">002-4819000140007-0000000249</span></div><div class="cell" style="left:856px;top:115px;width:33px;height:25px;"><div class="cb on" style="left:10px;top:6px"></div></div><div class="cell" style="left:889px;top:115px;width:51px;height:25px;"><span style="letter-spacing:-0.254px;">25.11.24</span></div><div class="cell" style="left:940px;top:115px;width:91px;height:25px;"><span style="letter-spacing:-0.267px;">4819000140007</span></div><div class="cell" style="left:1031px;top:115px;width:109px;height:25px;"><span style="letter-spacing:-0.178px;">ОДО "ЛюксСофтСе</span></div><div class="cell" style="left:0px;top:140px;width:33px;height:25px;"><div class="cb" style="left:10px;top:6px"></div></div><div class="cell" style="left:33px;top:140px;width:33px;height:25px;"><div class="cb" style="left:10px;top:6px"></div></div><div class="cell" style="left:66px;top:140px;width:33px;height:25px;"><div class="cb" style="left:10px;top:6px"></div></div><div class="cell" style="left:99px;top:140px;width:33px;height:25px;"><div class="cb" style="left:10px;top:6px"></div></div><div class="cell" style="left:132px;top:140px;width:33px;height:25px;"><div class="cb" style="left:10px;top:6px"></div></div><div class="cell" style="left:165px;top:140px;width:33px;height:25px;"><div class="cb" style="left:10px;top:6px"></div></div><div class="cell" style="left:198px;top:140px;width:33px;height:25px;"><div class="cb" style="left:10px;top:6px"></div></div><div class="cell" style="left:231px;top:140px;width:33px;height:25px;"><div class="cb" style="left:10px;top:6px"></div></div><div class="cell" style="left:264px;top:140px;width:33px;height:25px;"><div class="cb" style="left:10px;top:6px"></div></div><div class="cell" style="left:297px;top:140px;width:33px;height:25px;"><div class="cb" style="left:10px;top:6px"></div></div><div class="cell" style="left:330px;top:140px;width:33px;height:25px;"><div class="cb on" style="left:10px;top:6px"></div></div><div class="cell" style="left:363px;top:140px;width:33px;height:25px;"><div class="cb" style="left:10px;top:6px"></div></div><div class="cell" style="left:396px;top:140px;width:33px;height:25px;"><div class="cb" style="left:10px;top:6px"></div></div><div class="cell" style="left:429px;top:140px;width:143px;height:25px;"><span style="letter-spacing:-0.315px;">00139</span></div><div class="cell" style="left:572px;top:140px;width:83px;height:25px;text-align:right;"><span style="letter-spacing:-0.370px;">24.12.24 14:56</span></div><div class="cell" style="left:655px;top:140px;width:201px;height:25px;"><span style="letter-spacing:-0.140px;">001-4819075760001-0000000050</span></div><div class="cell" style="left:856px;top:140px;width:33px;height:25px;"><div class="cb" style="left:10px;top:6px"></div></div><div class="cell" style="left:889px;top:140px;width:51px;height:25px;"><span style="letter-spacing:-0.365px;">24.12.24</span></div><div class="cell" style="left:940px;top:140px;width:91px;height:25px;"><span style="letter-spacing:-0.267px;">4819075760001</span></div><div class="cell" style="left:1031px;top:140px;width:109px;height:25px;"><span style="letter-spacing:-0.181px;">ООО "ЛюксСофтОг</span></div><div class="cell" style="left:0px;top:165px;width:33px;height:25px;"><div class="cb" style="left:10px;top:6px"></div></div><div class="cell" style="left:33px;top:165px;width:33px;height:25px;"><div class="cb" style="left:10px;top:6px"></div></div><div class="cell" style="left:66px;top:165px;width:33px;height:25px;"><div class="cb" style="left:10px;top:6px"></div></div><div class="cell" style="left:99px;top:165px;width:33px;height:25px;"><div class="cb" style="left:10px;top:6px"></div></div><div class="cell" style="left:132px;top:165px;width:33px;height:25px;"><div class="cb" style="left:10px;top:6px"></div></div><div class="cell" style="left:165px;top:165px;width:33px;height:25px;"><div class="cb" style="left:10px;top:6px"></div></div><div class="cell" style="left:198px;top:165px;width:33px;height:25px;"><div class="cb" style="left:10px;top:6px"></div></div><div class="cell" style="left:231px;top:165px;width:33px;height:25px;"><div class="cb" style="left:10px;top:6px"></div></div><div class="cell" style="left:264px;top:165px;width:33px;height:25px;"><div class="cb" style="left:10px;top:6px"></div></div><div class="cell" style="left:297px;top:165px;width:33px;height:25px;"><div class="cb" style="left:10px;top:6px"></div></div><div class="cell" style="left:330px;top:165px;width:33px;height:25px;"><div class="cb" style="left:10px;top:6px"></div></div><div class="cell" style="left:363px;top:165px;width:33px;height:25px;"><div class="cb" style="left:10px;top:6px"></div></div><div class="cell" style="left:396px;top:165px;width:33px;height:25px;"><div class="cb" style="left:10px;top:6px"></div></div><div class="cell" style="left:429px;top:165px;width:143px;height:25px;"><span style="letter-spacing:-0.315px;">00139</span></div><div class="cell" style="left:572px;top:165px;width:83px;height:25px;text-align:right;"><span style="letter-spacing:-0.370px;">24.12.24 14:56</span></div><div class="cell" style="left:655px;top:165px;width:201px;height:25px;"><span style="letter-spacing:-0.140px;">001-4819075760001-0000000051</span></div><div class="cell" style="left:856px;top:165px;width:33px;height:25px;"><div class="cb" style="left:10px;top:6px"></div></div><div class="cell" style="left:889px;top:165px;width:51px;height:25px;"><span style="letter-spacing:-0.365px;">24.12.24</span></div><div class="cell" style="left:940px;top:165px;width:91px;height:25px;"><span style="letter-spacing:-0.267px;">4819075760001</span></div><div class="cell" style="left:1031px;top:165px;width:109px;height:25px;"><span style="letter-spacing:-0.181px;">ООО "ЛюксСофтОг</span></div><div class="cell" style="left:0px;top:190px;width:33px;height:25px;background:#d5e5ea;"><div class="cb" style="left:10px;top:6px"></div></div><div class="cell" style="left:33px;top:190px;width:33px;height:25px;background:#d5e5ea;"><div class="cb" style="left:10px;top:6px"></div></div><div class="cell" style="left:66px;top:190px;width:33px;height:25px;background:#d5e5ea;"><div class="cb" style="left:10px;top:6px"></div></div><div class="cell" style="left:99px;top:190px;width:33px;height:25px;background:#d5e5ea;"><div class="cb" style="left:10px;top:6px"></div></div><div class="cell" style="left:132px;top:190px;width:33px;height:25px;background:#d5e5ea;"><div class="cb" style="left:10px;top:6px"></div></div><div class="cell" style="left:165px;top:190px;width:33px;height:25px;background:#d5e5ea;"><div class="cb" style="left:10px;top:6px"></div></div><div class="cell" style="left:198px;top:190px;width:33px;height:25px;background:#d5e5ea;"><div class="cb" style="left:10px;top:6px"></div></div><div class="cell" style="left:231px;top:190px;width:33px;height:25px;background:#d5e5ea;"><div class="cb" style="left:10px;top:6px"></div></div><div class="cell" style="left:264px;top:190px;width:33px;height:25px;background:#d5e5ea;"><div class="cb" style="left:10px;top:6px"></div></div><div class="cell" style="left:297px;top:190px;width:33px;height:25px;background:#d5e5ea;"><div class="cb" style="left:10px;top:6px"></div></div><div class="cell" style="left:330px;top:190px;width:33px;height:25px;background:#d5e5ea;"><div class="cb" style="left:10px;top:6px"></div></div><div class="cell" style="left:363px;top:190px;width:33px;height:25px;background:#d5e5ea;"><div class="cb" style="left:10px;top:6px"></div></div><div class="cell" style="left:396px;top:190px;width:33px;height:25px;background:#d5e5ea;"><div class="cb on" style="left:10px;top:6px"></div></div><div class="cell" style="left:429px;top:190px;width:143px;height:25px;background:#d5e5ea;"><span style="letter-spacing:-0.315px;">00140</span></div><div class="cell" style="left:572px;top:190px;width:83px;height:25px;background:#d5e5ea;text-align:right;"><span style="letter-spacing:-0.297px;">26.12.24 9:28</span></div><div class="cell" style="left:655px;top:190px;width:201px;height:25px;background:#d5e5ea;"><span style="letter-spacing:-0.140px;">001-4819075760001-0000000054</span></div><div class="cell" style="left:856px;top:190px;width:33px;height:25px;background:#d5e5ea;"><div class="cb" style="left:10px;top:6px"></div></div><div class="cell" style="left:889px;top:190px;width:51px;height:25px;background:#d5e5ea;"><span style="letter-spacing:-0.365px;">26.12.24</span></div><div class="cell" style="left:940px;top:190px;width:91px;height:25px;background:#d5e5ea;"><span style="letter-spacing:-0.267px;">4819075760001</span></div><div class="cell" style="left:1031px;top:190px;width:109px;height:25px;background:#d5e5ea;"><span style="letter-spacing:-0.181px;">ООО "ЛюксСофтОг</span></div><div class="hd" style="left:0px;top:0;width:33px;height:55px"><div class="hx" style="text-align:center;line-height:16px">Вкл.</div><svg class="abs" style="right:0;bottom:0" width="5" height="5" viewBox="0 0 5 5"><path d="M5 0v5H0z" fill="#2a8fd0"/></svg></div><div class="hd" style="left:33px;top:0;width:33px;height:55px"><div class="hx" style="text-align:center;line-height:16px">Экс-<br>пор-<br><span style='position:relative;left:3px'>ти-..</span></div><svg class="abs" style="right:0;bottom:0" width="5" height="5" viewBox="0 0 5 5"><path d="M5 0v5H0z" fill="#2a8fd0"/></svg></div><div class="hd" style="left:66px;top:0;width:33px;height:55px"><div class="hx" style="text-align:center;line-height:16px">Им-<br>пор-<br><span style='position:relative;left:3px'>ти-..</span></div><svg class="abs" style="right:0;bottom:0" width="5" height="5" viewBox="0 0 5 5"><path d="M5 0v5H0z" fill="#2a8fd0"/></svg></div><div class="hd" style="left:99px;top:0;width:33px;height:55px"><div class="hx" style="text-align:center;line-height:16px">Им-<br>пор-<br><span style='position:relative;left:3px'>ти-..</span></div><svg class="abs" style="right:0;bottom:0" width="5" height="5" viewBox="0 0 5 5"><path d="M5 0v5H0z" fill="#2a8fd0"/></svg></div><div class="hd" style="left:132px;top:0;width:33px;height:55px"><div class="hx" style="text-align:center;line-height:16px">Им-<br>пор-<br><span style='position:relative;left:3px'>ти-..</span></div><svg class="abs" style="right:0;bottom:0" width="5" height="5" viewBox="0 0 5 5"><path d="M5 0v5H0z" fill="#2a8fd0"/></svg></div><div class="hd" style="left:165px;top:0;width:33px;height:55px"><div class="hx" style="text-align:center;line-height:16px">Экс-<br>пор-<br><span style='position:relative;left:3px'>ти-..</span></div><svg class="abs" style="right:0;bottom:0" width="5" height="5" viewBox="0 0 5 5"><path d="M5 0v5H0z" fill="#2a8fd0"/></svg></div><div class="hd" style="left:198px;top:0;width:33px;height:55px"><div class="hx" style="text-align:center;line-height:16px">Им-<br>пор-<br><span style='position:relative;left:3px'>ти-..</span></div><svg class="abs" style="right:0;bottom:0" width="5" height="5" viewBox="0 0 5 5"><path d="M5 0v5H0z" fill="#2a8fd0"/></svg></div><div class="hd" style="left:231px;top:0;width:33px;height:55px"><div class="hx" style="text-align:center;line-height:16px">Экс-<br>пор-<br><span style='position:relative;left:3px'>ти-..</span></div><svg class="abs" style="right:0;bottom:0" width="5" height="5" viewBox="0 0 5 5"><path d="M5 0v5H0z" fill="#2a8fd0"/></svg></div><div class="hd" style="left:264px;top:0;width:33px;height:55px"><div class="hx" style="text-align:center;line-height:16px">Экс-<br>пор-<br><span style='position:relative;left:3px'>ти-..</span></div><svg class="abs" style="right:0;bottom:0" width="5" height="5" viewBox="0 0 5 5"><path d="M5 0v5H0z" fill="#2a8fd0"/></svg></div><div class="hd" style="left:297px;top:0;width:33px;height:55px"><div class="hx" style="text-align:center;line-height:16px">Экс-<br>пор-<br><span style='position:relative;left:3px'>ти-..</span></div><svg class="abs" style="right:0;bottom:0" width="5" height="5" viewBox="0 0 5 5"><path d="M5 0v5H0z" fill="#2a8fd0"/></svg></div><div class="hd" style="left:330px;top:0;width:33px;height:55px"><div class="hx" style="text-align:center;line-height:16px">От-<br>мена<br><span style='position:relative;left:2px'>на...</span></div><svg class="abs" style="right:0;bottom:0" width="5" height="5" viewBox="0 0 5 5"><path d="M5 0v5H0z" fill="#2a8fd0"/></svg></div><div class="hd" style="left:363px;top:0;width:33px;height:55px"><div class="hx" style="text-align:center;line-height:16px">ТН-2</div></div><div class="hd" style="left:396px;top:0;width:33px;height:55px"><div class="hx" style="text-align:center;line-height:16px">Тран<br>зит</div></div><div class="hd" style="left:429px;top:0;width:143px;height:55px"><div class="hx" style="text-align:left;line-height:16px">Номер документа по-<br>ставщика<br><span style='letter-spacing:-0.600px'>(BLRWBL/BLRDLN)</span></div></div><div class="hd" style="left:572px;top:0;width:83px;height:55px"><div class="hx" style="text-align:left;line-height:16px">Дата доку-<br>мента<br>поставщика</div></div><div class="hd" style="left:655px;top:0;width:201px;height:55px"><div class="hx" style="text-align:left;line-height:16px">Номер накладной</div><svg class="abs" style="right:0;bottom:0" width="5" height="5" viewBox="0 0 5 5"><path d="M5 0v5H0z" fill="#f03030"/></svg></div><div class="hd" style="left:856px;top:0;width:33px;height:55px"><div class="hx" style="text-align:center;line-height:16px">При-<br>нят</div></div><div class="hd" style="left:889px;top:0;width:51px;height:55px"><div class="hx" style="text-align:left;line-height:16px">Дата<br>наклад-<br>ной</div></div><div class="hd" style="left:940px;top:0;width:91px;height:55px"><div class="hx" style="text-align:left;line-height:16px">GLN<br>поставщика</div></div><div class="hd" style="left:1031px;top:0;width:109px;height:55px"><div class="hx" style="text-align:left;line-height:16px">Поставщик</div></div><div class="abs" style="left:1140px;top:0;width:18px;height:218px;background:#fff"></div><svg class="abs" style="left:1145px;top:6.500px" width="8" height="5" viewBox="0 0 8 5"><path d="M4 0.300L7.700 4.700H0.300z" fill="#dedede"/></svg><svg class="abs" style="left:1144.500px;top:204px" width="8" height="5" viewBox="0 0 8 5"><path d="M4 4.700L7.700 0.300H0.300z" fill="#dedede"/></svg><div class="abs" style="left:1142px;top:150px;width:13px;height:48px;background:#dcdcdc"></div><div class="abs" style="left:0;top:215px;width:1157px;height:18px;background:#fff"></div><div class="abs" style="left:17px;top:217px;width:310px;height:13px;background:#dcdcdc"></div><svg class="abs" style="left:6px;top:219px" width="6" height="9" viewBox="0 0 6 9"><path d="M5 0.500v8L0.500 4.500z" fill="#dcdcdc"/></svg><svg class="abs" style="left:1129px;top:219px" width="6" height="9" viewBox="0 0 6 9"><path d="M1 0.500v8L5.500 4.500z" fill="#dcdcdc"/></svg></div>
<div class="abs" style="left:639px;top:130px;width:35px;height:237px;border:3px solid #f93d3d"></div>
<div class="abs" style="left:242px;top:373px;width:28px;height:22px;border-radius:5px;background:#d5e5ea"></div><div class="abs" style="left:334px;top:373px;width:28px;height:22px;border-radius:5px;background:#d5e5ea"></div><svg class="abs" style="left:0;top:0px" width="500" height="400" viewBox="0 0 500 400"><circle cx="250.050" cy="379.2" r="1.600" fill="none" stroke="#35b5ee" stroke-width="1.200"/><path d="M254.800 379.5H263.300" stroke="#2a2a2a" stroke-width="1.200" stroke-linecap="round" fill="none"/><circle cx="250.050" cy="384.2" r="1.600" fill="none" stroke="#35b5ee" stroke-width="1.200"/><path d="M254.800 384.5H263.300" stroke="#2a2a2a" stroke-width="1.200" stroke-linecap="round" fill="none"/><circle cx="250.050" cy="389.2" r="1.600" fill="none" stroke="#35b5ee" stroke-width="1.200"/><path d="M254.800 389.5H263.300" stroke="#2a2a2a" stroke-width="1.200" stroke-linecap="round" fill="none"/><rect x="275.200" y="375" width="17.600" height="17.800" rx="2" fill="#fafafa"/><path d="M281.500 376.600v14.800M286.400 376.600v14.800M276.800 381.450h14.600M276.800 386.500h14.600" stroke="#35b5ee" stroke-width="1.300" fill="none"/><rect x="276.700" y="376.400" width="14.700" height="15" rx="1.500" fill="none" stroke="#2a2a2a" stroke-width="1.300"/><path d="M308.800 378.450h14.500M312.700 386.450h6.600" stroke="#2a2a2a" stroke-width="1.200" stroke-linecap="round" fill="none"/><path d="M310.800 382.450h10.400M314.600 390.500h2.700" stroke="#35b5ee" stroke-width="1.200" stroke-linecap="round" fill="none"/><path d="M349.91 378.67 L349.50 376.37 L346.30 376.37 L345.89 378.67 L344.38 379.55 L342.18 378.75 L340.58 381.52 L342.37 383.02 L342.37 384.78 L340.58 386.28 L342.18 389.05 L344.38 388.25 L345.89 389.13 L346.30 391.43 L349.50 391.43 L349.91 389.13 L351.42 388.25 L353.62 389.05 L355.22 386.28 L353.43 384.78 L353.43 383.02 L355.22 381.52 L353.62 378.75 L351.42 379.55z" fill="none" stroke="#2a2a2a" stroke-width="1.200" stroke-linejoin="round"/><circle cx="347.900" cy="383.900" r="2.600" fill="none" stroke="#35b5ee" stroke-width="1.400"/><path d="M378.900 378.5H387.300" stroke="#2a2a2a" stroke-width="1.200" stroke-linecap="round" fill="none"/><text x="374.400" y="380.0" font-size="5.800" font-weight="bold" font-family="Liberation Sans,sans-serif" fill="#35b5ee" text-anchor="middle">1</text><path d="M378.900 384.5H387.300" stroke="#2a2a2a" stroke-width="1.200" stroke-linecap="round" fill="none"/><text x="374.400" y="386.0" font-size="5.800" font-weight="bold" font-family="Liberation Sans,sans-serif" fill="#35b5ee" text-anchor="middle">2</text><path d="M378.900 390.45H387.300" stroke="#2a2a2a" stroke-width="1.200" stroke-linecap="round" fill="none"/><text x="374.400" y="391.95" font-size="5.800" font-weight="bold" font-family="Liberation Sans,sans-serif" fill="#35b5ee" text-anchor="middle">3</text><path d="M400.900 377.450h14.200M400.900 381.450h14.200M400.900 385.500h5.300M400.900 389.450h5.300" stroke="#2a2a2a" stroke-width="1.200" stroke-linecap="round" fill="none"/><path d="M409.500 387.450h5.900M412.400 384.500v6" stroke="#35b5ee" stroke-width="1.200" stroke-linecap="round" fill="none"/><path d="M438.500 379.500h-3.900a1.500 1.500 0 0 0 -1.500 1.500v8a1.500 1.500 0 0 0 1.500 1.500h8.400a1.500 1.500 0 0 0 1.500-1.500v-3.600" fill="none" stroke="#3a3a3a" stroke-width="1.400" stroke-linecap="round"/><path d="M439.500 384.200l7.400-7.300" stroke="#35b5ee" stroke-width="1.200" stroke-linecap="round" fill="none" stroke-width="1.300"/><path d="M441 376.700h6.100v6.400" fill="none" stroke="#35b5ee" stroke-opacity=".7" stroke-width="1.300"/><path d="M466.800 388.450h-2.300v-9h10.200M471.400 376.400l3.400 3.050l-3.400 3.050" stroke="#2a2a2a" stroke-width="1.200" stroke-linecap="round" fill="none" stroke-linejoin="miter"/><path d="M477.400 379.450h2v9h-10.200M472.600 385.400l-3.500 3.050l3.500 3.100" stroke="#35b5ee" stroke-width="1.200" stroke-linecap="round" fill="none" stroke-linejoin="miter"/></svg>
<div class="btn" style="left:882px;top:372px;width:243px;height:24px;border-color:#c8c8c8"><div class="t" style="left:7px;top:5px;letter-spacing:-0.600px;">(Все)</div><svg class="abs" style="left:226.500px;top:9px" width="11" height="7" viewBox="0 0 11 7"><path d="M1 1l4.500 4.300l4.500-4.300" fill="none" stroke="#111" stroke-width="2"/></svg></div>
<div class="cb" style="left:1135px;top:377px"></div>
<div class="t" style="left:1150.500px;top:379.500px;font-size:12.500px;letter-spacing:-0.583px;">Принятые</div>
<div class="btn" style="left:1209px;top:370px;width:192px;height:22px"><svg class="abs" style="left:14px;top:4.500px" width="12" height="12" viewBox="0 0 12 12"><path d="M1.500 9.200l.8-2.800l5.600-5.600q.5-.4 1 0l1 1q.4.500 0 1l-5.600 5.600z" fill="none" stroke="#333" stroke-width="1.100" stroke-linejoin="round"/><path d="M0.500 11.300h10" stroke="#4ec0f0" stroke-width="1.200"/></svg><div class="t" style="left:32px;top:4.500px;letter-spacing:-0.263px;">Заполнить атрибуты ЭТТН</div></div>
<div class="abs" style="left:239px;top:423px;width:1164px;height:1px;background:#d6d6d6"></div>
<div class="tab act" style="left:243px;top:403px;width:197px;height:20px;text-align:center;line-height:20px;white-space:nowrap"><span style="letter-spacing:-0.066px;">Строка электронной накладной</span></div>
<div class="tab" style="left:443px;top:403px;width:165.5px;height:20px;text-align:center;line-height:20px;white-space:nowrap"><span style="letter-spacing:-0.010px;">Сообщение по накладной</span></div>
<div class="tab" style="left:612.5px;top:403px;width:91.0px;height:20px;text-align:center;line-height:20px;white-space:nowrap"><span style="letter-spacing:0.116px;">Маркировка</span></div>
<div class="tab" style="left:707px;top:403px;width:128.5px;height:20px;text-align:center;line-height:20px;white-space:nowrap"><span style="letter-spacing:-0.082px;">Прослеживаемость</span></div>
<div class="tab" style="left:839px;top:403px;width:72.5px;height:20px;text-align:center;line-height:20px;white-space:nowrap"><span style="letter-spacing:-0.222px;">Действия</span></div>
<div class="tab" style="left:915px;top:403px;width:119px;height:20px;text-align:center;line-height:20px;white-space:nowrap"><span style="letter-spacing:-0.152px;">Печатные формы</span></div>
<div class="grid" style="left:242px;top:428px;width:1159px;height:233px"><div class="hd" style="left:0px;top:0;width:59px;height:53px"><div class="hx" style="text-align:right;line-height:16px;white-space:nowrap">Поряд-<br>ковый<br>номер</div></div><div class="hd" style="left:59px;top:0;width:104px;height:53px"><div class="hx" style="text-align:left;line-height:16px;white-space:nowrap"><span style='letter-spacing:-0.300px'>GTIN товара</span></div></div><div class="hd" style="left:163px;top:0;width:201px;height:53px"><div class="hx" style="text-align:left;line-height:16px;white-space:nowrap">Наименование товара</div></div><div class="hd" style="left:364px;top:0;width:33px;height:53px"><div class="hx" style="text-align:left;line-height:16px;white-space:nowrap">При-<br>знак<br>ви...</div></div><div class="hd" style="left:397px;top:0;width:104px;height:53px"><div class="hx" style="text-align:left;line-height:16px;white-space:nowrap">Код товара, при-<br>своенный<br>покупателем</div></div><div class="hd" style="left:501px;top:0;width:72px;height:53px"><div class="hx" style="text-align:left;line-height:16px;white-space:nowrap"><span style='letter-spacing:-0.350px'>Код ТНВЭД</span></div></div><div class="hd" style="left:573px;top:0;width:104px;height:53px"><div class="hx" style="text-align:left;line-height:16px;white-space:nowrap">Код товара, при-<br>своенный<br>поставщиком</div></div><div class="hd" style="left:677px;top:0;width:72px;height:53px"><div class="hx" style="text-align:right;line-height:16px;white-space:nowrap">Кол-во от-<br>гружае-<br>мого</div></div><div class="hd" style="left:749px;top:0;width:52px;height:53px"><div class="hx" style="text-align:left;line-height:16px;white-space:nowrap">Дата<br>изго-<br>товле...</div></div><div class="hd" style="left:801px;top:0;width:51px;height:53px"><div class="hx" style="text-align:left;line-height:16px;white-space:nowrap">Годен<br>до</div></div><div class="hd" style="left:852px;top:0;width:52px;height:53px"><div class="hx" style="text-align:left;line-height:16px;white-space:nowrap"><span style='letter-spacing:-0.450px'>НДС, %</span></div></div><div class="hd" style="left:904px;top:0;width:72px;height:53px"><div class="hx" style="text-align:right;line-height:16px;white-space:nowrap">Цена за<br>единицу<br>товара</div></div><div class="hd" style="left:976px;top:0;width:72px;height:53px"><div class="hx" style="text-align:right;line-height:16px;white-space:nowrap">Цена изго-<br>товителя за<br>единицу</div></div><div class="hd" style="left:1048px;top:0;width:72px;height:53px"><div class="hx" style="text-align:right;line-height:16px;white-space:nowrap">Стоимость<br>товарной<br>позиции</div></div><div class="hd" style="left:1120px;top:0;width:73px;height:53px"><div class="hx" style="text-align:right;line-height:16px;white-space:nowrap">Стоимость<br>товарной<br>позиции с...</div></div><div class="cell" style="left:0px;top:53px;width:59px;height:21px;line-height:20px;text-align:right;background:#d5e5ea;"><span style="letter-spacing:-0.287px;">1</span></div><div class="cell" style="left:59px;top:53px;width:104px;height:21px;line-height:20px;text-align:left;background:#d5e5ea;"><span style="letter-spacing:-0.282px;">4810151020187</span></div><div class="cell" style="left:163px;top:53px;width:201px;height:21px;line-height:20px;text-align:left;background:#d5e5ea;"><span style="letter-spacing:-0.450px;">БАЛЬЗАМ БЕЛИТА ЯНГ 300МЛ БЕ...</span></div><div class="cell" style="left:364px;top:53px;width:33px;height:21px;line-height:20px;text-align:left;background:#d5e5ea;"><span style="letter-spacing:-0.500px;">PROD</span></div><div class="cell" style="left:397px;top:53px;width:104px;height:21px;line-height:20px;text-align:left;background:#d5e5ea;"><span style=""></span></div><div class="cell" style="left:501px;top:53px;width:72px;height:21px;line-height:20px;text-align:left;background:#d5e5ea;"><span style=""></span></div><div class="cell" style="left:573px;top:53px;width:104px;height:21px;line-height:20px;text-align:left;background:#d5e5ea;"><span style="letter-spacing:-0.282px;">4810151020187</span></div><div class="cell" style="left:677px;top:53px;width:72px;height:21px;line-height:20px;text-align:right;background:#d5e5ea;"><span style="letter-spacing:-0.280px;">10</span></div><div class="cell" style="left:749px;top:53px;width:52px;height:21px;line-height:20px;text-align:left;background:#d5e5ea;"><span style=""></span></div><div class="cell" style="left:801px;top:53px;width:51px;height:21px;line-height:20px;text-align:left;background:#d5e5ea;"><span style=""></span></div><div class="cell" style="left:852px;top:53px;width:52px;height:21px;line-height:20px;text-align:left;background:#d5e5ea;"><span style="letter-spacing:-0.286px;">12.80</span></div><div class="cell" style="left:904px;top:53px;width:72px;height:21px;line-height:20px;text-align:right;background:#d5e5ea;"><span style="letter-spacing:-0.290px;">2,29</span></div><div class="cell" style="left:976px;top:53px;width:72px;height:21px;line-height:20px;text-align:right;background:#d5e5ea;"><span style=""></span></div><div class="cell" style="left:1048px;top:53px;width:72px;height:21px;line-height:20px;text-align:right;background:#d5e5ea;"><span style="letter-spacing:-0.290px;">20,3</span></div><div class="cell" style="left:1120px;top:53px;width:73px;height:21px;line-height:20px;text-align:right;background:#d5e5ea;"><span style=""></span></div><div class="cell" style="left:0px;top:74px;width:59px;height:21px;line-height:20px;text-align:right;"><span style="letter-spacing:-0.287px;">2</span></div><div class="cell" style="left:59px;top:74px;width:104px;height:21px;line-height:20px;text-align:left;"><span style="letter-spacing:-0.282px;">4810151002015</span></div><div class="cell" style="left:163px;top:74px;width:201px;height:21px;line-height:20px;text-align:left;"><span style="letter-spacing:-0.341px;">БАЛЬЗАМ Д/ВОЛ.РЕВИВОР 450М...</span></div><div class="cell" style="left:364px;top:74px;width:33px;height:21px;line-height:20px;text-align:left;"><span style="letter-spacing:-0.500px;">PROD</span></div><div class="cell" style="left:397px;top:74px;width:104px;height:21px;line-height:20px;text-align:left;"><span style=""></span></div><div class="cell" style="left:501px;top:74px;width:72px;height:21px;line-height:20px;text-align:left;"><span style=""></span></div><div class="cell" style="left:573px;top:74px;width:104px;height:21px;line-height:20px;text-align:left;"><span style="letter-spacing:-0.282px;">4810151002015</span></div><div class="cell" style="left:677px;top:74px;width:72px;height:21px;line-height:20px;text-align:right;"><span style="letter-spacing:-0.280px;">10</span></div><div class="cell" style="left:749px;top:74px;width:52px;height:21px;line-height:20px;text-align:left;"><span style=""></span></div><div class="cell" style="left:801px;top:74px;width:51px;height:21px;line-height:20px;text-align:left;"><span style=""></span></div><div class="cell" style="left:852px;top:74px;width:52px;height:21px;line-height:20px;text-align:left;"><span style="letter-spacing:-0.286px;">12.80</span></div><div class="cell" style="left:904px;top:74px;width:72px;height:21px;line-height:20px;text-align:right;"><span style="letter-spacing:-0.290px;">1,99</span></div><div class="cell" style="left:976px;top:74px;width:72px;height:21px;line-height:20px;text-align:right;"><span style=""></span></div><div class="cell" style="left:1048px;top:74px;width:72px;height:21px;line-height:20px;text-align:right;"><span style="letter-spacing:-0.286px;">17,64</span></div><div class="cell" style="left:1120px;top:74px;width:73px;height:21px;line-height:20px;text-align:right;"><span style=""></span></div><div class="cell" style="left:0px;top:95px;width:59px;height:21px;line-height:20px;text-align:right;"><span style="letter-spacing:-0.287px;">3</span></div><div class="cell" style="left:59px;top:95px;width:104px;height:21px;line-height:20px;text-align:left;"><span style="letter-spacing:-0.282px;">4810153018977</span></div><div class="cell" style="left:163px;top:95px;width:201px;height:21px;line-height:20px;text-align:left;"><span style="letter-spacing:-0.265px;">БАЛЬЗАМ Д/ВОЛ.МАСЛО АРГ/Ж...</span></div><div class="cell" style="left:364px;top:95px;width:33px;height:21px;line-height:20px;text-align:left;"><span style="letter-spacing:-0.500px;">PROD</span></div><div class="cell" style="left:397px;top:95px;width:104px;height:21px;line-height:20px;text-align:left;"><span style=""></span></div><div class="cell" style="left:501px;top:95px;width:72px;height:21px;line-height:20px;text-align:left;"><span style=""></span></div><div class="cell" style="left:573px;top:95px;width:104px;height:21px;line-height:20px;text-align:left;"><span style="letter-spacing:-0.282px;">4810153018977</span></div><div class="cell" style="left:677px;top:95px;width:72px;height:21px;line-height:20px;text-align:right;"><span style="letter-spacing:-0.280px;">10</span></div><div class="cell" style="left:749px;top:95px;width:52px;height:21px;line-height:20px;text-align:left;"><span style=""></span></div><div class="cell" style="left:801px;top:95px;width:51px;height:21px;line-height:20px;text-align:left;"><span style=""></span></div><div class="cell" style="left:852px;top:95px;width:52px;height:21px;line-height:20px;text-align:left;"><span style="letter-spacing:-0.286px;">12.80</span></div><div class="cell" style="left:904px;top:95px;width:72px;height:21px;line-height:20px;text-align:right;"><span style="letter-spacing:-0.290px;">2,39</span></div><div class="cell" style="left:976px;top:95px;width:72px;height:21px;line-height:20px;text-align:right;"><span style=""></span></div><div class="cell" style="left:1048px;top:95px;width:72px;height:21px;line-height:20px;text-align:right;"><span style="letter-spacing:-0.286px;">21,19</span></div><div class="cell" style="left:1120px;top:95px;width:73px;height:21px;line-height:20px;text-align:right;"><span style=""></span></div><div class="abs" style="left:17px;top:216px;width:311px;height:13px;background:#dcdcdc"></div><svg class="abs" style="left:6px;top:218px" width="6" height="9" viewBox="0 0 6 9"><path d="M5 0.500v8L0.500 4.500z" fill="#dcdcdc"/></svg><svg class="abs" style="left:1146px;top:218px" width="6" height="9" viewBox="0 0 6 9"><path d="M1 0.500v8L5.500 4.500z" fill="#dcdcdc"/></svg></div>
<div class="abs" style="left:242px;top:663px;width:28px;height:22px;border-radius:5px;background:#d5e5ea"></div><svg class="abs" style="left:0;top:290px" width="500" height="400" viewBox="0 0 500 400"><circle cx="250.050" cy="379.2" r="1.600" fill="none" stroke="#35b5ee" stroke-width="1.200"/><path d="M254.800 379.5H263.300" stroke="#2a2a2a" stroke-width="1.200" stroke-linecap="round" fill="none"/><circle cx="250.050" cy="384.2" r="1.600" fill="none" stroke="#35b5ee" stroke-width="1.200"/><path d="M254.800 384.5H263.300" stroke="#2a2a2a" stroke-width="1.200" stroke-linecap="round" fill="none"/><circle cx="250.050" cy="389.2" r="1.600" fill="none" stroke="#35b5ee" stroke-width="1.200"/><path d="M254.800 389.5H263.300" stroke="#2a2a2a" stroke-width="1.200" stroke-linecap="round" fill="none"/><rect x="275.200" y="375" width="17.600" height="17.800" rx="2" fill="#fafafa"/><path d="M281.500 376.600v14.800M286.400 376.600v14.800M276.800 381.450h14.600M276.800 386.500h14.600" stroke="#35b5ee" stroke-width="1.300" fill="none"/><rect x="276.700" y="376.400" width="14.700" height="15" rx="1.500" fill="none" stroke="#2a2a2a" stroke-width="1.300"/><path d="M308.800 378.450h14.500M312.700 386.450h6.600" stroke="#2a2a2a" stroke-width="1.200" stroke-linecap="round" fill="none"/><path d="M310.800 382.450h10.400M314.600 390.500h2.700" stroke="#35b5ee" stroke-width="1.200" stroke-linecap="round" fill="none"/><path d="M349.91 378.67 L349.50 376.37 L346.30 376.37 L345.89 378.67 L344.38 379.55 L342.18 378.75 L340.58 381.52 L342.37 383.02 L342.37 384.78 L340.58 386.28 L342.18 389.05 L344.38 388.25 L345.89 389.13 L346.30 391.43 L349.50 391.43 L349.91 389.13 L351.42 388.25 L353.62 389.05 L355.22 386.28 L353.43 384.78 L353.43 383.02 L355.22 381.52 L353.62 378.75 L351.42 379.55z" fill="none" stroke="#2a2a2a" stroke-width="1.200" stroke-linejoin="round"/><circle cx="347.900" cy="383.900" r="2.600" fill="none" stroke="#35b5ee" stroke-width="1.400"/><path d="M378.900 378.5H387.300" stroke="#2a2a2a" stroke-width="1.200" stroke-linecap="round" fill="none"/><text x="374.400" y="380.0" font-size="5.800" font-weight="bold" font-family="Liberation Sans,sans-serif" fill="#35b5ee" text-anchor="middle">1</text><path d="M378.900 384.5H387.300" stroke="#2a2a2a" stroke-width="1.200" stroke-linecap="round" fill="none"/><text x="374.400" y="386.0" font-size="5.800" font-weight="bold" font-family="Liberation Sans,sans-serif" fill="#35b5ee" text-anchor="middle">2</text><path d="M378.900 390.45H387.300" stroke="#2a2a2a" stroke-width="1.200" stroke-linecap="round" fill="none"/><text x="374.400" y="391.95" font-size="5.800" font-weight="bold" font-family="Liberation Sans,sans-serif" fill="#35b5ee" text-anchor="middle">3</text><path d="M400.900 377.450h14.200M400.900 381.450h14.200M400.900 385.500h5.300M400.900 389.450h5.300" stroke="#2a2a2a" stroke-width="1.200" stroke-linecap="round" fill="none"/><path d="M409.500 387.450h5.900M412.400 384.500v6" stroke="#35b5ee" stroke-width="1.200" stroke-linecap="round" fill="none"/><path d="M438.500 379.500h-3.900a1.500 1.500 0 0 0 -1.500 1.500v8a1.500 1.500 0 0 0 1.500 1.500h8.400a1.500 1.500 0 0 0 1.500-1.500v-3.600" fill="none" stroke="#3a3a3a" stroke-width="1.400" stroke-linecap="round"/><path d="M439.500 384.200l7.400-7.300" stroke="#35b5ee" stroke-width="1.200" stroke-linecap="round" fill="none" stroke-width="1.300"/><path d="M441 376.700h6.100v6.400" fill="none" stroke="#35b5ee" stroke-opacity=".7" stroke-width="1.300"/><path d="M466.800 388.450h-2.300v-9h10.200M471.400 376.400l3.400 3.050l-3.400 3.050" stroke="#2a2a2a" stroke-width="1.200" stroke-linecap="round" fill="none" stroke-linejoin="miter"/><path d="M477.400 379.450h2v9h-10.200M472.600 385.400l-3.500 3.050l3.500 3.100" stroke="#35b5ee" stroke-width="1.200" stroke-linecap="round" fill="none" stroke-linejoin="miter"/></svg>
<div class="abs" style="left:240px;top:687px;width:1163px;height:1px;background:#d6d6d6"></div>
<div class="btn" style="left:242px;top:692px;width:42px;height:22px"><svg class="abs" style="left:18.500px;top:4px" width="4" height="14" viewBox="0 0 4 14"><circle cx="2" cy="2.500" r="1.100" fill="#111"/><circle cx="2" cy="7" r="1.100" fill="#111"/><circle cx="2" cy="11.500" r="1.100" fill="#111"/></svg></div>
<div class="cb" style="left:288px;top:697px"></div>
<div class="t" style="left:305.500px;top:697px;letter-spacing:0.011px;">Включить корректировку на форме</div>
<div class="btn" style="left:978px;top:692px;width:42px;height:22px"><svg class="abs" style="left:13px;top:4px" width="14" height="13" viewBox="992 697 14 13"><path d="M994 702.700A5.200 5.200 0 0 1 1003.400 700.300" fill="none" stroke="#222" stroke-width="1.500"/><path d="M1005.400 697.800v4.600l-4.300-.900z" fill="#222"/><path d="M1004.300 703.800A5.200 5.200 0 0 1 994.900 706.200" fill="none" stroke="#35b5ee" stroke-width="1.500"/><path d="M992.900 708.700v-4.600l4.300.900z" fill="#35b5ee"/></svg></div>
<div class="btn" style="left:1024px;top:692px;width:106px;height:22px"><svg class="abs" style="left:14px;top:4px" width="13" height="13" viewBox="1039 697 13 13"><path d="M1039.800 699.600a1.800 1.800 0 0 1 1.800-1.800h5.600l3.200 3.200v5.800a1.800 1.800 0 0 1 -1.800 1.800h-7a1.800 1.800 0 0 1 -1.800-1.800z" fill="none" stroke="#3a3a3a" stroke-width="1.300"/><path d="M1041.900 707v-3.800h6.400v3.800" fill="none" stroke="#35b5ee" stroke-width="1.300"/></svg><div class="t" style="left:32.500px;top:4px;color:#777;letter-spacing:-0.216px;">Сохранить</div></div>
<div class="btn" style="left:1134px;top:692px;width:102px;height:22px"><svg class="abs" style="left:13px;top:3px" width="14" height="14" viewBox="1148 696 14 14"><path d="M1151 701v6.200a1.400 1.400 0 0 0 1.400 1.400h4.600a1.400 1.400 0 0 0 1.400-1.400v-6.200" fill="none" stroke="#222" stroke-width="1.300"/><path d="M1149.200 699.200h11M1152.900 699v-1.300a.8.800 0 0 1 .8-.8h2a.8.800 0 0 1 .8.800v1.300" fill="none" stroke="#35b5ee" stroke-width="1.200"/></svg><div class="t" style="left:32px;top:4px;color:#777;letter-spacing:-0.180px;">Отменить</div></div>
<div class="btn" style="left:1240px;top:692px;width:64px;height:22px"><svg class="abs" style="left:13.500px;top:5px" width="13" height="10" viewBox="0 0 13 10"><path d="M0.800 5.600l3.300 3.400l8-8.200" fill="none" stroke="#222" stroke-width="1.300"/></svg><div class="t" style="left:32px;top:4px;letter-spacing:-0.600px;">OK</div></div>
<div class="btn" style="left:1308px;top:692px;width:93px;height:22px"><svg class="abs" style="left:15px;top:4.500px" width="10" height="10" viewBox="0 0 10 10"><path d="M0.600 0.600l8.800 8.600M9.400 0.600l-8.800 8.600" fill="none" stroke="#222" stroke-width="1.300"/></svg><div class="t" style="left:31.500px;top:4px;letter-spacing:-0.231px;">Закрыть</div></div>
</div>
</div>
</body></html>
